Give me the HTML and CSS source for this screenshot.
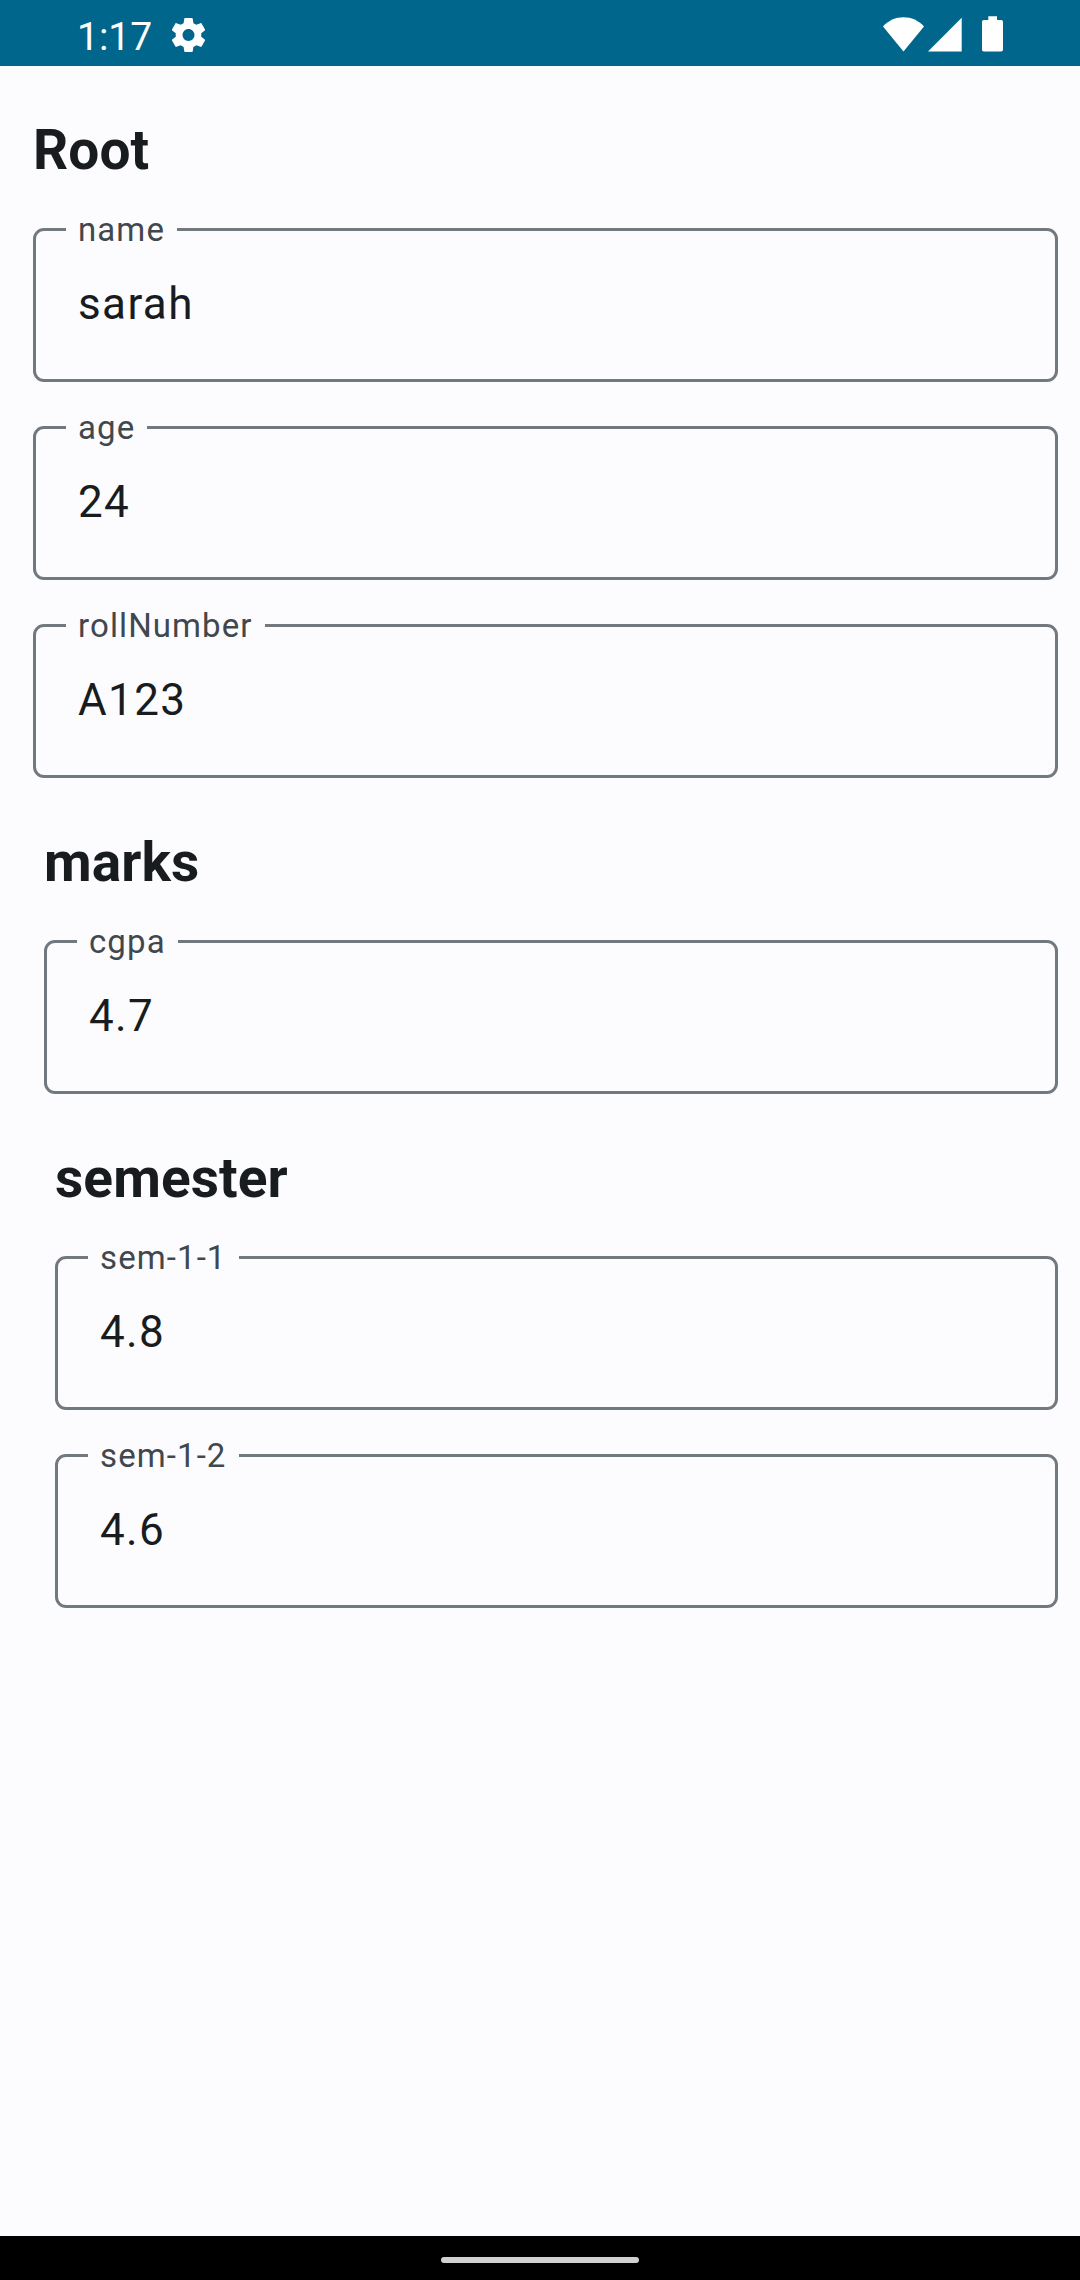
FILE: index.html
```html
<!DOCTYPE html>
<html lang="en">
<head>
<meta charset="utf-8">
<title>Root</title>
<link rel="stylesheet" href="styles.css">
</head>
<body>
<div class="screen">
  <header class="status-bar">
    <span class="clock">1:17</span>
    <svg class="gear" viewBox="0 0 24 24"><path d="M19.43 12.98c.04-.32.07-.64.07-.98s-.03-.66-.07-.98l2.11-1.65c.19-.15.24-.42.12-.64l-2-3.46c-.12-.22-.39-.3-.61-.22l-2.49 1c-.52-.4-1.08-.73-1.69-.98l-.38-2.65C14.46 2.18 14.25 2 14 2h-4c-.25 0-.46.18-.49.42l-.38 2.65c-.61.25-1.17.59-1.69.98l-2.49-1c-.23-.09-.49 0-.61.22l-2 3.46c-.13.22-.07.49.12.64l2.11 1.65c-.04.32-.07.65-.07.98s.03.66.07.98l-2.11 1.65c-.19.15-.24.42-.12.64l2 3.46c.12.22.39.3.61.22l2.49-1c.52.4 1.08.73 1.69.98l.38 2.65c.03.24.24.42.49.42h4c.25 0 .46-.18.49-.42l.38-2.65c.61-.25 1.17-.59 1.69-.98l2.49 1c.23.09.49 0 .61-.22l2-3.46c.12-.22.07-.49-.12-.64l-2.11-1.65zM12 15.5c-1.93 0-3.5-1.57-3.5-3.5s1.57-3.5 3.5-3.5 3.5 1.57 3.5 3.5-1.57 3.5-3.5 3.5z"/></svg>
    <div class="system-icons">
      <svg class="wifi" viewBox="0 0 41 36"><path d="M20.5 35.5 0 10.5C5.500 4.500 12.500 1.300 20.500 1.300S35.500 4.500 41 10.500z"/></svg>
      <svg class="signal" viewBox="0 0 34 36"><path d="M0 35.500H33.700V1.700z"/></svg>
      <svg class="battery" viewBox="0 0 21 36"><path d="M6.300 0.300h8.700V4h4.200A1.800 1.800 0 0 1 21 5.800v27.900a1.800 1.800 0 0 1-1.800 1.800H1.800A1.800 1.800 0 0 1 0 33.700V5.800A1.800 1.800 0 0 1 1.800 4h4.500z"/></svg>
    </div>
  </header>
  <main class="form">
    <section class="group">
      <h1 class="title">Root</h1>
      <div class="field"><span class="label">name</span><span class="value">sarah</span></div>
      <div class="field"><span class="label">age</span><span class="value">24</span></div>
      <div class="field"><span class="label">rollNumber</span><span class="value">A123</span></div>
      <section class="group nested">
        <h2 class="title">marks</h2>
        <div class="field"><span class="label">cgpa</span><span class="value">4.7</span></div>
        <section class="group nested">
          <h3 class="title">semester</h3>
          <div class="field"><span class="label">sem-1-1</span><span class="value">4.8</span></div>
          <div class="field"><span class="label">sem-1-2</span><span class="value">4.6</span></div>
        </section>
      </section>
    </section>
  </main>
  <footer class="nav-bar"><div class="handle"></div></footer>
</div>
</body>
</html>
```
FILE: styles.css
```css
* { box-sizing: border-box; }

body {
  margin: 0;
  background: #fcfcff;
  color: #191c1e;
  font-family: Roboto, sans-serif;
}

.screen {
  display: flex;
  flex-direction: column;
  width: 1080px;
  height: 2280px;
}

.status-bar {
  display: flex;
  align-items: flex-start;
  height: 66px;
  padding: 0 77px;
  background: #00668b;
  color: #fff;
}

.status-bar svg { display: block; fill: currentColor; }

.clock {
  width: 91px;
  padding-top: 14px;
  font-size: 39px;
  line-height: 46px;
}

.gear { width: 41px; height: 42px; margin-top: 14px; }

.system-icons {
  display: flex;
  margin: 16px 0 0 auto;
}

.wifi { width: 41px; height: 36px; }
.signal { width: 34px; height: 36px; margin-left: 4px; }
.battery { width: 21px; height: 36px; margin-left: 20px; }

.form {
  flex: 1;
  padding: 44px 22px 0 33px;
}

.group {
  display: flex;
  flex-direction: column;
}

.nested { padding-left: 11px; }

.title {
  margin: 0;
  height: 118px;
  padding-top: 7px;
  font-size: 55px;
  font-weight: 700;
  letter-spacing: 0.1px;
  line-height: 66px;
}

.field {
  display: flex;
  flex-direction: column;
  align-items: flex-start;
  height: 154px;
  margin-bottom: 44px;
  padding-left: 30px;
  border: 3px solid #71787e;
  border-radius: 11px;
}

.label {
  height: 44px;
  margin-top: -23px;
  padding: 0 12px;
  background: #fcfcff;
  color: #41484d;
  font-size: 33px;
  letter-spacing: 1.1px;
  line-height: 44px;
}

.value {
  margin-top: 19px;
  padding-left: 12px;
  font-size: 44px;
  letter-spacing: 1.375px;
  line-height: 66px;
}

.nav-bar {
  display: flex;
  justify-content: center;
  height: 44px;
  padding-top: 21px;
  background: #000;
}

.handle {
  width: 198px;
  height: 6px;
  border-radius: 3px;
  background: #d1d1d1;
}
```
